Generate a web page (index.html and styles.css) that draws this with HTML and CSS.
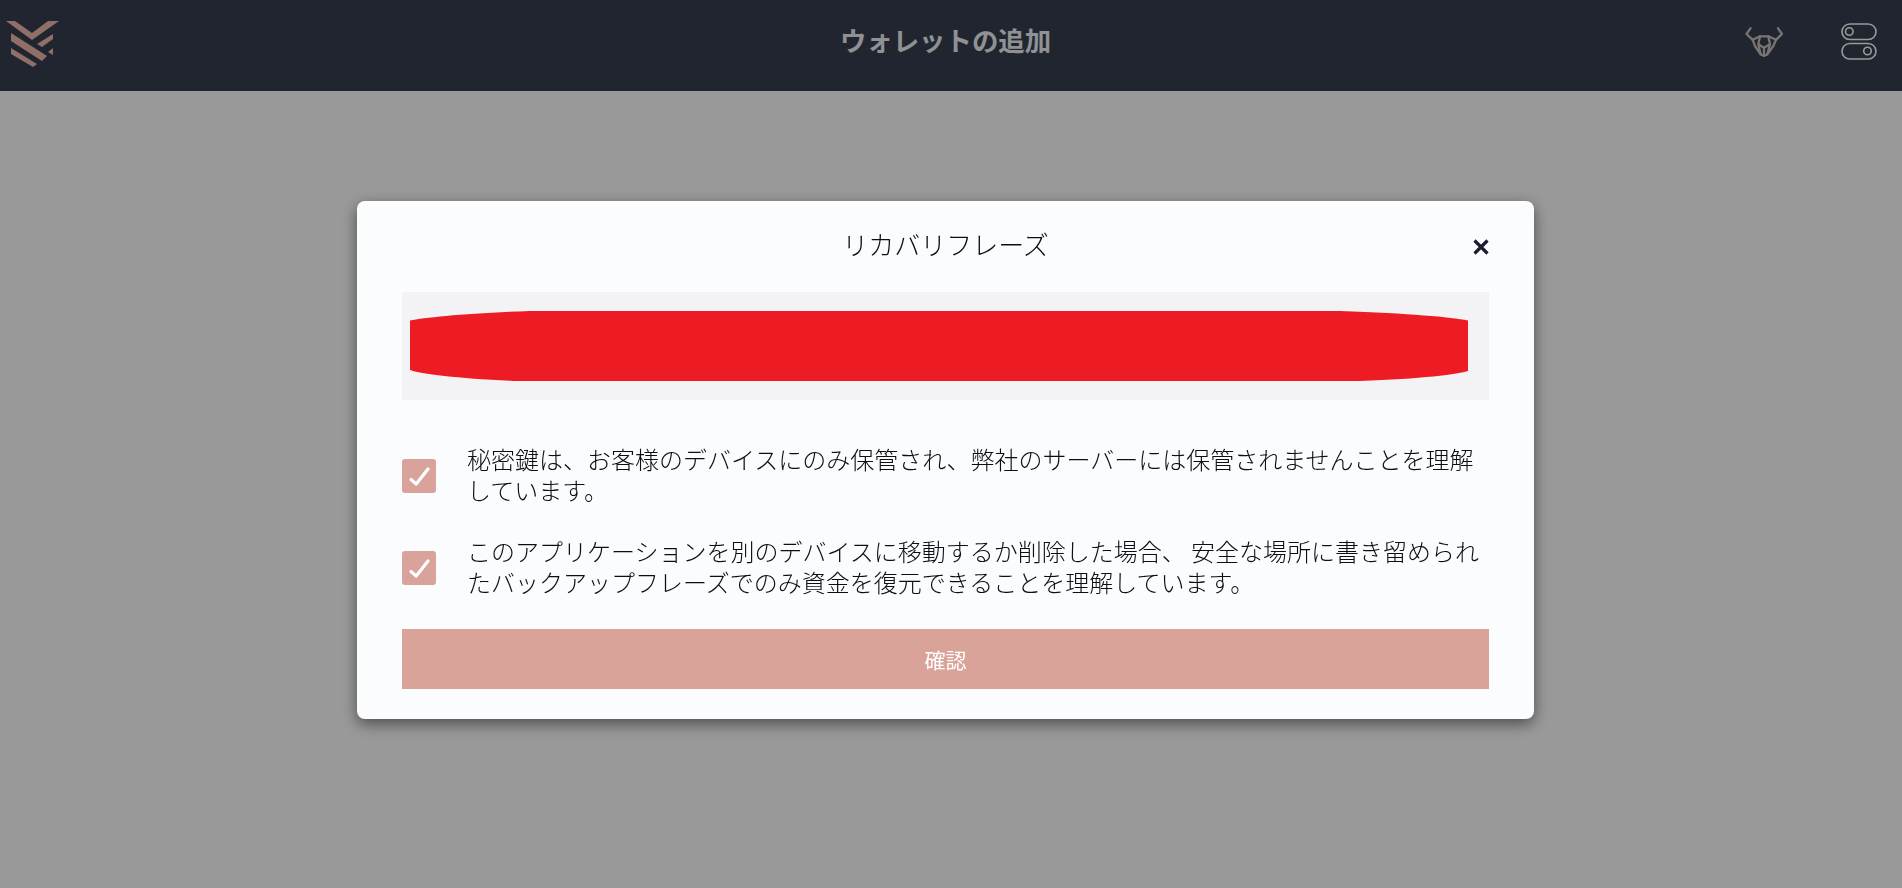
FILE: index.html
```html
<!DOCTYPE html>
<html lang="ja">
<head>
    <meta charset="UTF-8">
    <meta name="viewport" content="width=device-width, initial-scale=1.0">
    <title>ウォレットの追加</title>
    <link rel="stylesheet" href="styles.css">
</head>
<body>
    <header class="topbar">
        <a class="logo" href="#">
            <svg width="54" height="48" viewBox="5 16 54 48">
                <polygon points="6,17 15,17 32,29 48,17 59,17 32,36"/>
                <polygon points="11,29 11,37 42,57 47,52"/>
                <polygon points="11,44 11,50 33,63 37,60"/>
                <polygon points="37,40 53,30 53,35 42,43"/>
                <polygon points="48,48 53,44 53,51"/>
            </svg>
        </a>
        <h1 class="page-title">ウォレットの追加</h1>
        <div class="topbar-icons">
            <svg class="bull" width="38" height="30" viewBox="0 0 38 30">
                <path d="M5.5 1.3 L1.5 7 L7.7 12.8 L15 9.3 L23.3 9.3 L31 12.8 L37 7 L33 1.3"/>
                <path d="M7.7 12.8 L10 19 L15.7 27.3 L19 29 L22.3 27.3 L28.3 19 L31 12.8"/>
                <path d="M15 9.3 L13.3 17.3 L15.7 27.3 M23.3 9.3 L25 17.3 L22.3 27.3 M13.3 17.3 L19 20.7 L25 17.3 M19 20.7 L19 28"/>
            </svg>
            <svg class="toggles" width="36" height="37" viewBox="0 0 36 37">
                <rect x="1" y="1" width="34" height="15.5" rx="7.75"/>
                <circle cx="8.3" cy="8.5" r="3.8"/>
                <rect x="1" y="20.5" width="34" height="15.5" rx="7.75"/>
                <circle cx="26.5" cy="28" r="3.8"/>
            </svg>
        </div>
    </header>

    <div class="overlay">
        <div class="modal">
            <div class="modal-head">
                <span></span>
                <h2 class="modal-title">リカバリフレーズ</h2>
                <svg class="close" width="16" height="16" viewBox="0 0 16 16">
                    <path d="M1.5 1.5 L14.5 14.5 M14.5 1.5 L1.5 14.5"/>
                </svg>
            </div>

            <div class="phrase">
                <svg width="1058" height="70" viewBox="0 0 1058 70">
                    <path d="M0 9.5 C15 6.5 60 2 120 0 L930 0 C1000 2.5 1040 6 1058 9.5 L1058 60 C1050 63 1010 68 950 70 L103 70 C50 67.5 10 63 0 59 Z"/>
                </svg>
            </div>

            <div class="agree-row">
                <span class="checkbox">
                    <svg width="34" height="34" viewBox="0 0 34 34"><path d="M9 20.5 L14.2 25 L26 10"/></svg>
                </span>
                <p>秘密鍵は、お客様のデバイスにのみ保管され、弊社のサーバーには保管されませんことを理解しています。</p>
            </div>
            <div class="agree-row">
                <span class="checkbox">
                    <svg width="34" height="34" viewBox="0 0 34 34"><path d="M9 20.5 L14.2 25 L26 10"/></svg>
                </span>
                <p>このアプリケーションを別のデバイスに移動するか削除した場合、 安全な場所に書き留められたバックアップフレーズでのみ資金を復元できることを理解しています。</p>
            </div>

            <button class="confirm" type="button">確認</button>
        </div>
    </div>
</body>
</html>
```

FILE: styles.css
```css
* {
    box-sizing: border-box;
}
html, body {
    height: 100%;
}
body {
    margin: 0;
    background: #fff;
    font-family: "Noto Sans CJK JP", "Noto Sans", sans-serif;
    overflow: hidden;
}

.topbar {
    height: 91px;
    padding-right: 11px;
    background: #373e4f;
    display: grid;
    grid-template-columns: 1fr auto 1fr;
    align-items: center;
}
.logo {
    display: flex;
    padding: 0 0 4px 5px;
}
.logo polygon {
    fill: #eebaad;
}
.page-title {
    margin: 0 0 12px;
    font-size: 26.4px;
    font-weight: 700;
    color: #eef2f6;
}
.topbar-icons {
    justify-self: end;
    display: flex;
    align-items: center;
    gap: 58px;
    padding-right: 14px;
    margin-top: -8px;
}
.bull path {
    fill: none;
    stroke: #c8c2bf;
    stroke-width: 2.3;
    stroke-linejoin: round;
    stroke-linecap: round;
}
.toggles rect, .toggles circle {
    fill: none;
    stroke: #fff;
    stroke-width: 1.6;
}

.overlay {
    position: fixed;
    top: 0;
    left: 0;
    right: 0;
    bottom: 0;
    padding: 201px 11px 0 0;
    background: rgba(0, 0, 0, 0.4);
    display: flex;
    justify-content: center;
    align-items: flex-start;
}
.modal {
    width: 1177px;
    height: 518px;
    padding: 0 45px;
    background: #fbfcfe;
    border-radius: 8px;
    box-shadow: 0 5px 15px rgba(0, 0, 0, 0.5);
}
.modal-head {
    height: 91px;
    display: grid;
    grid-template-columns: 1fr auto 1fr;
    align-items: center;
}
.modal-title {
    margin: 0 0 7px;
    font-size: 26px;
    font-weight: 300;
    color: #0c0e16;
}
.close {
    justify-self: end;
}
.close path {
    fill: none;
    stroke: #1a1d33;
    stroke-width: 3.2;
}

.phrase {
    height: 108px;
    padding-left: 8px;
    background: #f3f3f5;
    display: flex;
    align-items: center;
    margin-bottom: 43px;
}
.phrase svg {
    display: block;
}
.phrase path {
    fill: #ed1c24;
}

.agree-row {
    display: flex;
    align-items: center;
    gap: 31px;
    margin-bottom: 28px;
}
.agree-row p {
    flex: 1;
    margin: 0;
    padding-bottom: 2px;
    font-size: 24px;
    font-weight: 300;
    line-height: 31px;
    color: #0c0e16;
}
.checkbox {
    flex: none;
    width: 34px;
    height: 34px;
    margin-top: 2px;
    background: #d9a39b;
    border-radius: 3px;
}
.checkbox svg {
    display: block;
}
.checkbox path {
    fill: none;
    stroke: #fff;
    stroke-width: 3.2;
    stroke-linecap: round;
    stroke-linejoin: round;
}

.confirm {
    display: block;
    width: 100%;
    height: 60px;
    margin-top: 30px;
    padding: 0;
    border: none;
    background: #daa39a;
    color: #fff;
    font-family: inherit;
    font-size: 21px;
    cursor: pointer;
}
```
